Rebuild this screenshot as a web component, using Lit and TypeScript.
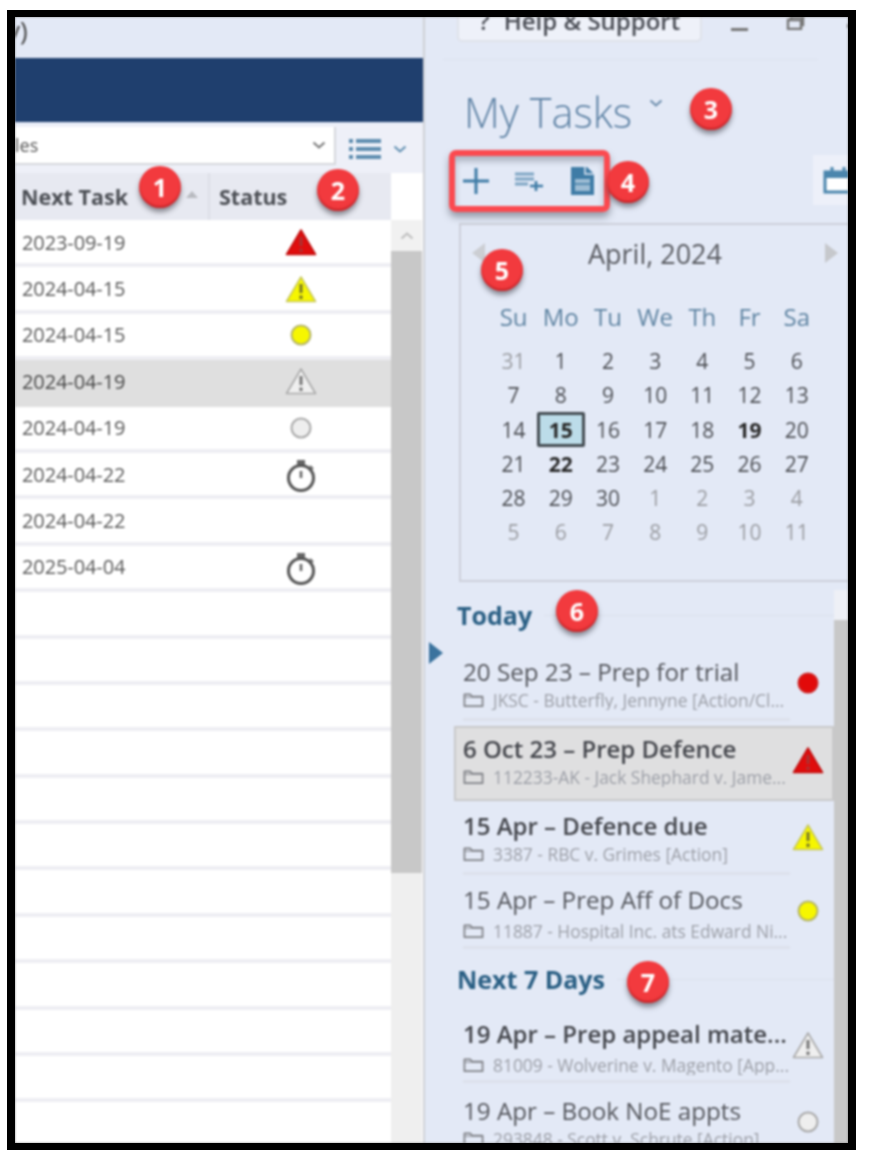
import { LitElement, html, css, svg } from "lit";
import { customElement } from "lit/decorators.js";

const tri = (fill: string, stroke: string, mark: string) => svg`<svg class="ico tri" viewBox="0 0 32 28"><path d="M16 2 30.5 26.5H1.5Z" fill="${fill}" stroke="${stroke}" stroke-width="1.6" stroke-linejoin="round"/><path d="M16 9v9M16 20.5v3.5" stroke="${mark}" stroke-width="3" fill="none"/></svg>`;
const dot = (fill: string, stroke: string) => svg`<svg class="ico dot" viewBox="0 0 22 22"><circle cx="11" cy="11" r="9.5" fill="${fill}" stroke="${stroke}" stroke-width="2"/></svg>`;
const timer = svg`<svg class="ico timer" viewBox="0 0 30 34"><path d="M11 1h8v5h-8z" fill="#666"/><circle cx="15" cy="19" r="12.5" fill="none" stroke="#555" stroke-width="3"/><path d="M15 12v7" stroke="#666" stroke-width="2.6"/><path d="m24 7 3 3" stroke="#666" stroke-width="2"/></svg>`;
const folder = svg`<svg class="folder" viewBox="0 0 22 16"><path d="M1.5 14.5V2h6l2 2.5h11v10z" fill="none" stroke="#808287" stroke-width="1.8" stroke-linejoin="round"/><path d="M1.5 5h19" stroke="#808287" stroke-width="1"/></svg>`;
const chevron = (c: string) => svg`<svg class="chev" viewBox="0 0 14 8"><path d="m1.5 1.5 5.5 5 5.5-5" fill="none" stroke="${c}" stroke-width="2"/></svg>`;

const icons: Record<string, unknown> = {
  red: tri("#e00d0d", "#c21010", "#a33"),
  yellow: tri("#f6f600", "#c9c95a", "#77772a"),
  grey: tri("#efefef", "#a9a9a9", "#777"),
  ydot: dot("#f6f600", "#b5b56a"),
  gdot: dot("#eeeeee", "#a8a8a8"),
  rdot: dot("#e20a0a", "#d02020"),
  timer,
};

const rows: [string, string][] = [
  ["2023-09-19", "red"],
  ["2024-04-15", "yellow"],
  ["2024-04-15", "ydot"],
  ["2024-04-19", "grey"],
  ["2024-04-19", "gdot"],
  ["2024-04-22", "timer"],
  ["2024-04-22", ""],
  ["2025-04-04", "timer"],
  ...Array.from({ length: 12 }, (): [string, string] => ["", ""]),
];

type Item = { t: string; s: string; i: string; bold?: boolean; sel?: boolean; wide?: boolean; tight?: boolean };
const today: Item[] = [
  { t: "20 Sep 23 – Prep for trial", s: "JKSC - Butterfly, Jennyne [Action/Cl...", i: "rdot" },
  { t: "6 Oct 23 – Prep Defence", s: "112233-AK - Jack Shephard v. Jame...", i: "red", bold: true, sel: true },
  { t: "15 Apr – Defence due", s: "3387 - RBC v. Grimes [Action]", i: "yellow", bold: true, tight: true },
  { t: "15 Apr – Prep Aff of Docs", s: "11887 - Hospital Inc. ats Edward Ni...", i: "ydot", wide: true },
];
const next: Item[] = [
  { t: "19 Apr – Prep appeal mate...", s: "81009 - Wolverine v. Magento [App...", i: "grey", bold: true, wide: true },
  { t: "19 Apr – Book NoE appts", s: "293848 - Scott v. Schrute [Action]", i: "gdot" },
];

const dow = ["Su", "Mo", "Tu", "We", "Th", "Fr", "Sa"];
const days: [string, string][] = [
  ["31", "o"], ["1", ""], ["2", ""], ["3", ""], ["4", ""], ["5", ""], ["6", ""],
  ["7", ""], ["8", ""], ["9", ""], ["10", ""], ["11", ""], ["12", ""], ["13", ""],
  ["14", ""], ["15", "cur"], ["16", ""], ["17", ""], ["18", ""], ["19", "b"], ["20", ""],
  ["21", ""], ["22", "b"], ["23", ""], ["24", ""], ["25", ""], ["26", ""], ["27", ""],
  ["28", ""], ["29", ""], ["30", ""], ["1", "o"], ["2", "o"], ["3", "o"], ["4", "o"],
  ["5", "o"], ["6", "o"], ["7", "o"], ["8", "o"], ["9", "o"], ["10", "o"], ["11", "o"],
];

@customElement("app-root")
export class AppRoot extends LitElement {
  static styles = css`
    :host { display: block; width: 870px; height: 1161px; background: #fff; font-family: "Open Sans", "Liberation Sans", sans-serif; overflow: hidden; }
    .frame { box-sizing: border-box; width: 849px; height: 1140px; margin: 10px 0 0 7px; border: solid #000; border-width: 7px 8px 7px 8px; overflow: hidden; background: #8a8a8a; }
    .inner { position: relative; width: 100%; height: 100%; display: flex; overflow: hidden; background: #e3e9f6; filter: blur(0.8px); }
    .left { width: 408px; flex: none; display: flex; flex-direction: column; border-right: 2px solid #cfd1d6; box-sizing: content-box; }
    .strip { height: 41px; flex: none; font-size: 26px; line-height: 26px; color: #444; overflow: hidden; margin-left: -8px; }
    .bar { height: 64px; flex: none; background: #1f3f6e; }
    .filter { height: 49px; flex: none; margin-top: 2px; display: flex; background: #eef0f8; }
    .select { width: 321px; height: 38px; margin-top: 3px; box-sizing: border-box; background: #fff; border: solid #d5d7dc; border-width: 0 2px 2px 0; display: flex; align-items: center; justify-content: space-between; padding-right: 8px; font-size: 18px; color: #555; }
    .select .chev { width: 14px; height: 8px; }
    .listbtn { display: flex; align-items: center; gap: 12px; margin-left: 13px; }
    .listbtn .chev { width: 14px; height: 8px; }
    .listico { width: 32px; height: 22px; }
    .head { height: 47px; flex: none; display: flex; background: #fff; }
    .th { height: 47px; box-sizing: border-box; background: #e7e9f1; display: flex; align-items: center; font-size: 21.5px; font-weight: 700; color: #4c4f55; }
    .th.next { width: 195px; padding-left: 6px; border-right: 2px solid #dcdee6; justify-content: space-between; padding-right: 10px; }
    .th.status { width: 181px; padding-left: 9px; }
    .sort { width: 0; height: 0; border: 6px solid transparent; border-top: 0; border-bottom: 7px solid #b8bac0; margin-top: -4px; }
    .body { flex: 1; display: flex; min-height: 0; background: #fff; }
    .table { width: 376px; flex: none; overflow: hidden; padding-top: 1px; }
    .tr { height: 46.4px; box-sizing: border-box; border-bottom: 4px solid #eeeef3; display: flex; align-items: center; font-size: 20px; color: #595959; }
    .tr.sel { background: #dfdfdf; color: #484848; border-bottom-color: #dfdfdf; }
    .date { width: 195px; padding-left: 7px; box-sizing: border-box; letter-spacing: -0.1px; }
    .stat { width: 181px; display: flex; justify-content: center; }
    .scroll { flex: 1; display: flex; flex-direction: column; background: #efefef; margin-right: 1px; }
    .sbtn { height: 31px; flex: none; display: flex; align-items: center; justify-content: center; background: #f1f1f1; }
    .sbtn .chev { width: 14px; height: 8px; transform: rotate(180deg); }
    .thumb { height: 622px; flex: none; background: #c8c8c8; }
    .ico { display: block; flex: none; }
    .tri { width: 32px; height: 28px; }
    .dot { width: 22px; height: 22px; }
    .timer { width: 30px; height: 34px; margin-top: 4px; }

    .right { flex: 1; min-width: 0; display: flex; flex-direction: column; position: relative; }
    .top { height: 42px; flex: none; display: flex; align-items: flex-start; border-bottom: 1px solid #dde2ee; margin-left: 18px; margin-right: 30px; }
    .help { flex: none; margin-left: 14px; width: 245px; height: 25px; box-sizing: border-box; background: #eef1f9; border: solid #dfe2ea; border-width: 0 2px 2px 2px; border-radius: 0 0 5px 5px; display: flex; justify-content: center; align-items: center; gap: 14px; font-size: 24px; font-weight: 600; color: #4b4e56; }
    .help span { margin-top: -15px; line-height: 28px; }
    .wins { flex: none; display: flex; align-items: flex-start; margin-left: 29px; gap: 38px; }
    .min { width: 17px; height: 3px; background: #777; margin-top: 11px; }
    .max { width: 19px; height: 14px; margin-top: -1px; }
    .close { width: 4px; height: 4px; background: #666; margin: 7px 0 0 4px; }
    .title { height: 90px; flex: none; display: flex; align-items: center; padding-left: 39px; padding-top: 14px; box-sizing: border-box; gap: 17px; font-size: 41.5px; font-weight: 300; color: #5f83a5; }
    .title .chev { width: 14px; height: 8px; margin-top: -18px; }
    .tools { height: 62px; flex: none; display: flex; align-items: center; padding-left: 36px; box-sizing: border-box; position: relative; }
    .tools svg { display: block; flex: none; }
    .i1 { width: 30px; height: 30px; }
    .i2 { width: 30px; height: 20px; margin-left: 23px; }
    .i3 { width: 25px; height: 30px; margin-left: 26px; }
    .calbtn { margin-left: auto; width: 35px; height: 50px; background: #edf0f9; display: flex; align-items: center; padding-left: 10px; box-sizing: border-box; overflow: hidden; margin-top: -2px; }
    .calbtn svg { width: 30px; height: 28px; }
    .cal { height: 359px; flex: none; margin: 11px 0 0 34px; box-sizing: border-box; border: solid #cdd0da; border-width: 2px 0 2px 2px; padding: 14px 0 0 11px; }
    .calhead { width: 366px; height: 28px; display: flex; align-items: center; justify-content: space-between; font-size: 27px; color: #585a60; }
    .arr { width: 0; height: 0; border: 10px solid transparent; }
    .arr.l { border-left: 0; border-right: 13px solid #ccced3; }
    .arr.r { border-right: 0; border-left: 13px solid #c6c8cc; }
    .grid { display: grid; grid-template-columns: repeat(7, 47.2px); grid-auto-rows: 34.2px; margin-left: 18px; align-items: center; justify-items: center; font-size: 21px; color: #4c4e53; }
    .grid.names { margin-top: 32px; margin-bottom: 11px; color: #5f84a2; font-size: 24px; }
    .o { color: #9b9da2; }
    .b { font-weight: 700; color: #282828; }
    .cur { font-weight: 700; color: #282828; background: #bcdce9; border: 3px solid #444c52; border-radius: 2px; width: 48px; height: 35px; box-sizing: border-box; display: flex; align-items: center; justify-content: center; }

    .lower { flex: 1; min-height: 0; display: flex; position: relative; overflow: hidden; }
    .list { width: 409px; flex: none; }
    .mark { position: absolute; left: 4px; top: 60px; width: 0; height: 0; border: 11px solid transparent; border-right: 0; border-left: 14px solid #3b739e; }
    .h { display: flex; align-items: center; height: 32px; margin-left: 32px; gap: 12px; font-size: 25px; font-weight: 700; color: #2a5f84; white-space: nowrap; }
    .h::after { content: ""; flex: 1; height: 1px; background: #dbe0ec; }
    .h.first { margin-top: 17px; margin-bottom: 18px; }
    .h.second { margin-top: 11px; margin-bottom: 16px; }
    .item { margin-left: 29px; width: 380px; height: 75px; margin-bottom: 2px; box-sizing: border-box; display: flex; }
    .item.tight { margin-bottom: -1px; }
    .item.sel { background: #dfdfe0; box-shadow: inset 0 0 0 2px #c9c9ca; }
    .txt { width: 327px; flex: none; margin-left: 9px; height: 72px; box-sizing: border-box; padding-top: 8px; border-bottom: 3px solid #dde1ec; }
    .item.sel .txt { border-bottom-color: transparent; }
    .ttl { height: 30px; line-height: 30px; font-size: 24.2px; color: #54565c; white-space: nowrap; }
    .item.bold .ttl { font-weight: 600; color: #44464c; font-size: 24px; }
    .sub { display: flex; align-items: center; gap: 9px; height: 20px; font-size: 17.4px; color: #9c9fa7; white-space: nowrap; overflow: hidden; margin-top: 3px; }
    .item.wide .sub { margin-top: 6px; }
    .folder { width: 21px; height: 16px; flex: none; }
    .icon { flex: 1; display: flex; justify-content: center; align-items: center; height: 68px; padding-right: 8px; }
    .sb2 { flex: 1; margin-top: 8px; display: flex; flex-direction: column; }
    .sb2 .top2 { height: 30px; flex: none; background: #eef0f6; }
    .sb2 .th2 { flex: 1; background: #c8c8c8; }

    .badge { position: absolute; width: 42px; height: 42px; border-radius: 50%; background: #f23a3e; color: #fff; font-weight: 700; font-size: 25px; font-family: "Open Sans", sans-serif; display: flex; align-items: center; justify-content: center; box-shadow: 0 4px 5px rgba(60, 60, 70, .55), inset 0 -2px 2px rgba(170, 20, 25, .6); }
    .box { position: absolute; left: 434px; top: 133px; width: 161px; height: 62px; box-sizing: border-box; border: 6px solid #fb4a50; border-radius: 7px; box-shadow: 0 5px 7px rgba(70, 75, 90, .5), inset 0 5px 6px rgba(70, 75, 90, .35); }
  `;

  private item(i: Item) {
    const cls = ["item", i.bold ? "bold" : "", i.sel ? "sel" : "", i.wide ? "wide" : "", i.tight ? "tight" : ""].join(" ");
    return html`<div class=${cls}>
      <div class="txt">
        <div class="ttl">${i.t}</div>
        <div class="sub">${folder}<span>${i.s}</span></div>
      </div>
      <div class="icon">${icons[i.i]}</div>
    </div>`;
  }

  render() {
    const badges: [number, number, string][] = [
      [160, 187, "1"], [338, 190, "2"], [711, 109, "3"], [628, 182, "4"], [502, 270, "5"], [577, 611, "6"], [648, 982, "7"],
    ];
    return html`<div class="frame"><div class="inner">
      <div class="left">
        <div class="strip">y)</div>
        <div class="bar"></div>
        <div class="filter">
          <div class="select"><span>les</span>${chevron("#777")}</div>
          <div class="listbtn">
            <svg class="listico" viewBox="0 0 32 22"><path d="M0 3h4M7 3h25M0 11h4M7 11h25M0 19h4M7 19h25" stroke="#5f8eb0" stroke-width="4"/></svg>
            ${chevron("#5f8eb0")}
          </div>
        </div>
        <div class="head">
          <div class="th next"><span>Next Task</span><i class="sort"></i></div>
          <div class="th status">Status</div>
        </div>
        <div class="body">
          <div class="table">
            ${rows.map(([d, s], n) => html`<div class="tr ${n === 3 ? "sel" : ""}">
              <div class="date">${d}</div>
              <div class="stat">${s ? icons[s] : ""}</div>
            </div>`)}
          </div>
          <div class="scroll">
            <div class="sbtn">${chevron("#bdbdbd")}</div>
            <div class="thumb"></div>
          </div>
        </div>
      </div>
      <div class="right">
        <div class="top">
          <div class="help"><span>?</span><span>Help &amp; Support</span></div>
          <div class="wins">
            <div class="min"></div>
            <svg class="max" viewBox="0 0 19 14"><path d="M2 4h13v9H2zM5 3V1h12v8h-2" fill="none" stroke="#777" stroke-width="2.4"/></svg>
            <div class="close"></div>
          </div>
        </div>
        <div class="title"><span>My Tasks</span>${chevron("#6b8cab")}</div>
        <div class="tools">
          <svg class="i1" viewBox="0 0 30 30"><path d="M15 2v26M2 15h26" stroke="#3f7ca6" stroke-width="3"/></svg>
          <svg class="i2" viewBox="0 0 30 20"><path d="M1 3h19M1 8h19M1 13h13" stroke="#7ea5c4" stroke-width="3"/><path d="M22 10v10M16 15h13" stroke="#3f7ca6" stroke-width="2.6"/></svg>
          <svg class="i3" viewBox="0 0 25 30"><path d="M1 1h16l7 7v21H1z" fill="#3f7ca6"/><path d="M5 13h15v12H5z" fill="#9dbcd4"/><path d="M5 18h15" stroke="#3f7ca6" stroke-width="1.5"/><path d="M15 1v7h9" fill="none" stroke="#e3e9f6" stroke-width="1.5"/></svg>
          <div class="calbtn"><svg viewBox="0 0 30 28"><path d="M2 6h26v20H2z" fill="#fff" stroke="#4b86ad" stroke-width="3"/><path d="M2 6h26v6H2z" fill="#4b86ad"/><path d="M9 1v6M21 1v6" stroke="#4b86ad" stroke-width="3"/></svg></div>
        </div>
        <div class="cal">
          <div class="calhead"><i class="arr l"></i><span>April, 2024</span><i class="arr r"></i></div>
          <div class="grid names">${dow.map((d) => html`<span>${d}</span>`)}</div>
          <div class="grid">${days.map(([d, c]) => html`<span class=${c}>${d}</span>`)}</div>
        </div>
        <div class="lower">
          <div class="list">
            <div class="h first">Today</div>
            ${today.map((i) => this.item(i))}
            <div class="h second">Next 7 Days</div>
            ${next.map((i) => this.item(i))}
          </div>
          <i class="mark"></i>
          <div class="sb2"><div class="top2"></div><div class="th2"></div></div>
        </div>
      </div>
      <div class="box"></div>
      ${badges.map(([x, y, n]) => html`<div class="badge" style="left:${x - 21 - 15}px;top:${y - 21 - 17}px">${n}</div>`)}
    </div></div>`;
  }
}
